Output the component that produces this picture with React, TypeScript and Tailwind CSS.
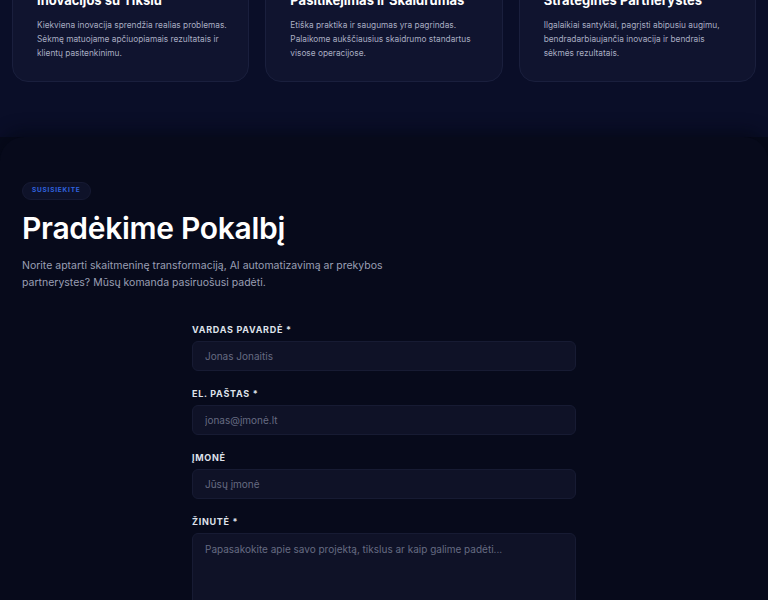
import React from 'react';

const values = [
  {
    title: 'Inovacijos su Tiksiu',
    text: 'Kiekviena inovacija sprendžia realias problemas. Sėkmę matuojame apčiuopiamais rezultatais ir klientų pasitenkinimu.',
    width: 'max-w-[200px]',
  },
  {
    title: 'Pasitikėjimas ir Skaidrumas',
    text: 'Etiška praktika ir saugumas yra pagrindas. Palaikome aukščiausius skaidrumo standartus visose operacijose.',
    width: 'max-w-[200px]',
  },
  {
    title: 'Strateginės Partnerystės',
    text: 'Ilgalaikiai santykiai, pagrįsti abipusiu augimu, bendradarbiaujančia inovacija ir bendrais sėkmės rezultatais.',
    width: 'max-w-[185px]',
  },
];

const fields = [
  { label: 'VARDAS PAVARDĖ *', placeholder: 'Jonas Jonaitis' },
  { label: 'EL. PAŠTAS *', placeholder: 'jonas@įmonė.lt' },
  { label: 'ĮMONĖ', placeholder: 'Jūsų įmonė' },
];

export default function App() {
  return (
    <div className="h-[600px] overflow-hidden bg-[#070a1b] font-['Inter','Noto_Sans',sans-serif]">
      {/* values section, scrolled so only card bottoms show */}
      <section className="bg-[#0a0e28] px-3 pb-[55px]">
        <div className="-mt-[34px] grid grid-cols-3 gap-4">
          {values.map((v) => (
            <div
              key={v.title}
              className="rounded-2xl border border-[#1a1f3d] bg-[#10142f] pl-6 pr-3 pt-6 pb-[21px]"
            >
              <h3 className="mb-[9px] text-[13px] font-bold leading-[18px] text-white">{v.title}</h3>
              <p className={`${v.width} text-[8.3px] leading-[14px] text-[#a9adc2]`}>{v.text}</p>
            </div>
          ))}
        </div>
      </section>

      {/* contact section */}
      <section className="relative rounded-t-3xl bg-[#070a1b] px-[22px] pt-[37px] shadow-[0_-6px_16px_rgba(4,6,18,0.6)]">
        <span className="inline-flex h-[18px] items-center rounded-full border border-[#161a33] bg-[#0e1229] px-[9px] text-[6.5px] font-bold tracking-[0.12em] text-[#3064e0]">
          SUSISIEKITE
        </span>
        <h2 className="mt-[9px] text-[30px] font-semibold leading-[38px] tracking-[-0.01em] text-white">
          Pradėkime Pokalbį
        </h2>
        <p className="mt-[10px] w-[380px] text-[10.5px] leading-[17px] text-[#9a9fb4]">
          Norite aptarti skaitmeninę transformaciją, AI automatizavimą ar prekybos partnerystes? Mūsų komanda
          pasiruošusi padėti.
        </p>

        <form className="mx-auto mt-[32px] flex w-[384px] flex-col gap-[16px]">
          {fields.map((f) => (
            <div key={f.label} className="flex flex-col gap-[5px]">
              <label className="text-[9px] font-bold leading-[13px] tracking-[0.08em] text-[#dfe1ea]">
                {f.label}
              </label>
              <input
                placeholder={f.placeholder}
                className="h-[30px] rounded-md border border-[#171b33] bg-[#0f1227] px-3 text-[10px] text-white outline-none placeholder:text-[#666b82]"
              />
            </div>
          ))}
          <div className="flex flex-col gap-[5px]">
            <label className="text-[9px] font-bold leading-[13px] tracking-[0.08em] text-[#dfe1ea]">ŽINUTĖ *</label>
            <textarea
              placeholder="Papasakokite apie savo projektą, tikslus ar kaip galime padėti..."
              className="h-[110px] resize-none rounded-md border border-[#171b33] bg-[#0f1227] px-3 py-[8px] text-[10px] leading-[14px] text-white outline-none placeholder:text-[#666b82]"
            />
          </div>
        </form>
      </section>
    </div>
  );
}
